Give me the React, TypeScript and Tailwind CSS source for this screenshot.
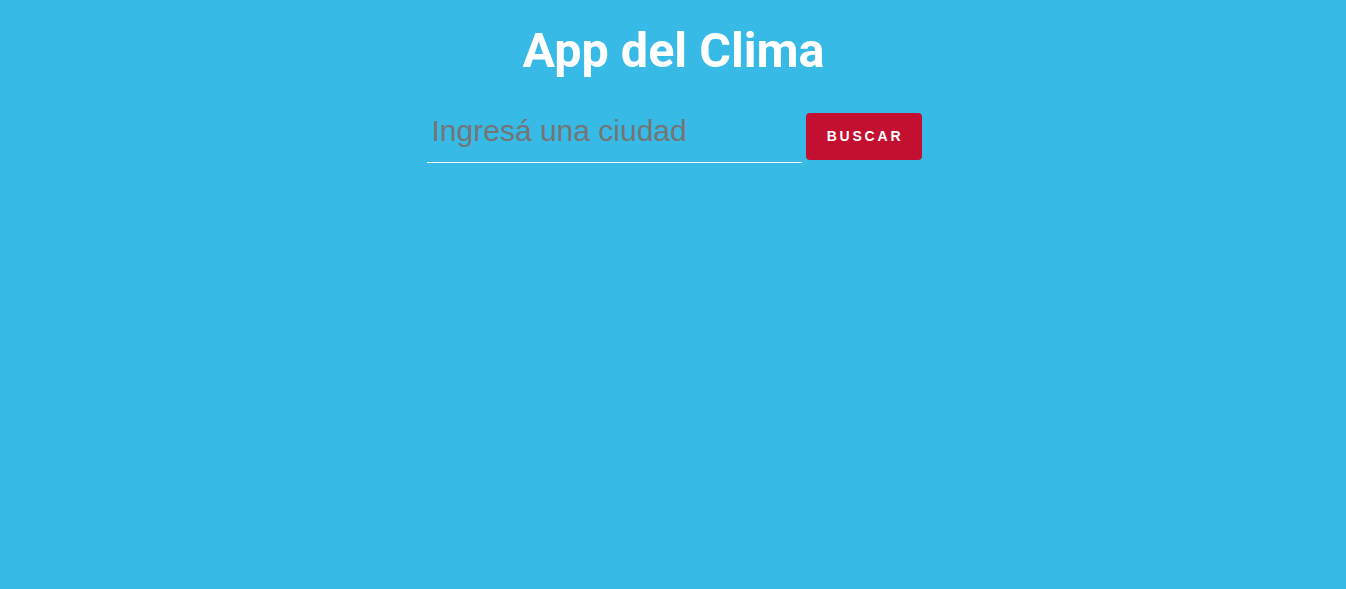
import React, { useState } from 'react';

const App: React.FC = () => {
  const [city, setCity] = useState('');

  return (
    <div className="min-h-screen w-full bg-[#37bae6] flex flex-col items-center pt-[27px]">
      <h1 className="text-[48.5px] leading-none font-bold text-white font-['Roboto',sans-serif] ml-[1px]">App del Clima</h1>
      <form
        className="flex items-start gap-[4px] mt-[37px] ml-[2px]"
        onSubmit={e => e.preventDefault()}
      >
        <input
          type="text"
          value={city}
          onChange={e => setCity(e.target.value)}
          placeholder="Ingresá una ciudad"
          className="w-[375px] h-[50px] pb-[12px] px-[5px] bg-transparent border-b border-white text-[30px] text-[#757575] placeholder:text-[#757575] font-['Liberation_Sans',Arial,sans-serif] focus:outline-none"
        />
        <button
          type="submit"
          className="w-[116px] h-[47px] bg-[#c41030] rounded-[4px] text-white text-[14px] font-bold tracking-[0.2em] pl-[3px] font-['Liberation_Sans',Arial,sans-serif]"
        >
          BUSCAR
        </button>
      </form>
    </div>
  );
};

export default App;
